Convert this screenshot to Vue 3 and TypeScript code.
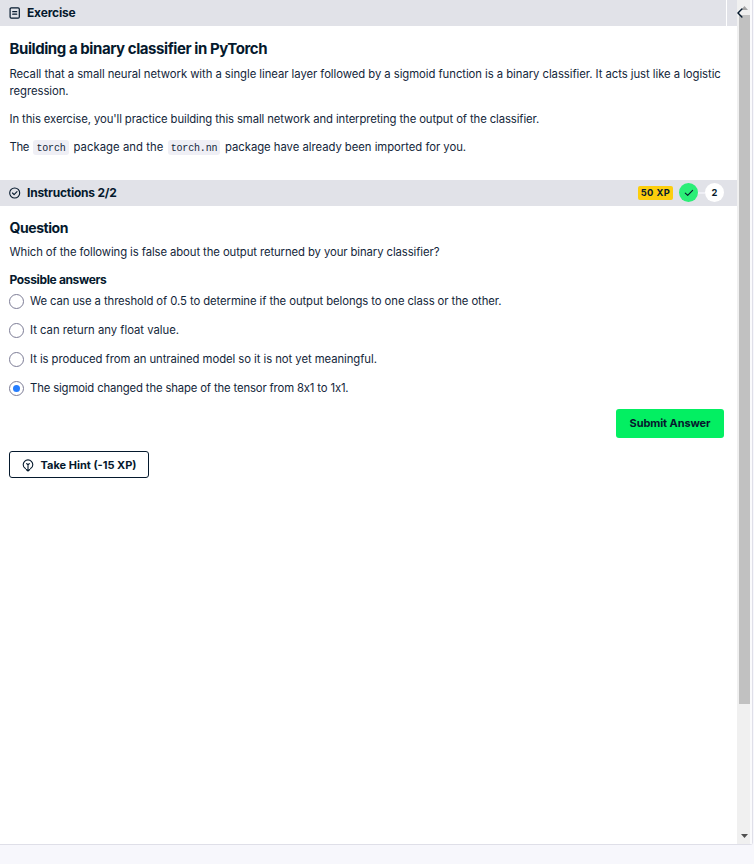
<script setup lang="ts">
import { ref } from 'vue'

interface Answer {
  id: string
  text: string
}

const answers: Answer[] = [
  { id: 'a1', text: 'We can use a threshold of 0.5 to determine if the output belongs to one class or the other.' },
  { id: 'a2', text: 'It can return any float value.' },
  { id: 'a3', text: 'It is produced from an untrained model so it is not yet meaningful.' },
  { id: 'a4', text: 'The sigmoid changed the shape of the tensor from 8x1 to 1x1.' },
]
const selected = ref<string>('a4')
</script>

<template>
  <div class="page">
    <div class="panel">
      <main class="content">
        <header class="bar">
          <svg class="bar-icon" viewBox="0 0 12 12" fill="none" stroke="#05192d" stroke-width="1.2" stroke-linecap="round">
            <rect x="1.1" y="0.9" width="9.2" height="10.2" rx="1.2" />
            <path d="M3.7 4.7h4M3.7 7.2h4" />
          </svg>
          <h2 class="bar-title exercise">Exercise</h2>
          <span class="divider"></span>
        </header>

        <section class="exercise-body">
          <h1 class="title">Building a binary classifier in PyTorch</h1>
          <p class="p1">Recall that a small neural network with a single linear layer followed by a sigmoid function is a binary classifier. It acts just like a logistic <br />regression.</p>
          <p class="p2">In this exercise, you'll practice building this small network and interpreting the output of the classifier.</p>
          <p class="p3"><span class="the">The</span><code class="c1">torch</code><span class="pkg">package and the</span><code class="c2">torch.nn</code><span class="have">package have already been imported for you.</span></p>
        </section>

        <header class="bar">
          <svg class="bar-icon" viewBox="0 0 12 12" fill="none" stroke="#05192d" stroke-width="1.1" stroke-linecap="round" stroke-linejoin="round">
            <circle cx="5.7" cy="6" r="5" />
            <path d="M3.5 6l1.6 1.6L8 4.7" />
          </svg>
          <h2 class="bar-title instructions">Instructions 2/2</h2>
          <div class="progress">
            <span class="xp">50 XP</span>
            <span class="step done">
              <svg viewBox="0 0 10 10" fill="none" stroke="#05192d" stroke-width="1.1" stroke-linecap="round" stroke-linejoin="round"><path d="M1.300 5.200l2.400 2.200L8.600 2.300" /></svg>
            </span>
            <span class="link"></span>
            <span class="step">2</span>
          </div>
        </header>

        <section class="question-body">
          <h3 class="question">Question</h3>
          <p class="prompt">Which of the following is false about the output returned by your binary classifier?</p>
          <h4 class="possible">Possible answers</h4>
          <ul class="answers">
            <li v-for="a in answers" :key="a.id" :class="['answer', a.id]" @click="selected = a.id">
              <span class="radio"><span v-if="selected === a.id" class="dot"></span></span>
              <span>{{ a.text }}</span>
            </li>
          </ul>
          <div class="actions"><button class="submit">Submit Answer</button></div>
          <button class="hint">
            <svg viewBox="0 0 12 13" fill="none" stroke="#05192d" stroke-width="1.1" stroke-linecap="round" stroke-linejoin="round">
              <path d="M3.400 9.500C2 8.700 1.200 7.300 1.200 5.700a4.800 4.800 0 0 1 9.600 0c0 1.600-.8 3-2.200 3.800M6 5v7M4.600 4.600L6 5.800l1.400-1.200M4.200 10.500L6 12l1.800-1.500" />
            </svg>
            <span>Take Hint (-15 XP)</span>
          </button>
        </section>
      </main>

      <aside class="scrollbar">
        <svg class="up" viewBox="0 0 13 15"><path d="M4 10h7L7.500 6z" fill="#a3a3a3" /></svg>
        <div class="thumb"></div>
        <svg class="down" viewBox="0 0 13 15"><path d="M4 5h7L7.500 9z" fill="#505050" /></svg>
        <svg class="collapse" viewBox="0 0 6 10" fill="none" stroke="#05192d" stroke-width="1.4" stroke-linecap="round"><path d="M4.900 1L1 5l3.900 4" /></svg>
      </aside>
    </div>
  </div>
</template>

<style>
body { margin: 0; background: #f7f7fc; }
</style>

<style scoped>
* { box-sizing: border-box; }
.page { height: 864px; background: #f7f7fc; color: #05192d; font-family: Inter, "Open Sans", sans-serif; font-size: 11.3px; font-feature-settings: "calt" 0; overflow: hidden; }
.panel { display: flex; width: 753px; height: 845px; background: #fff; border-right: 1px solid #dfdfe8; border-bottom: 1px solid #dfdfe8; border-radius: 0 0 3px 0; }
.content { flex: 1; min-width: 0; }
h1, h2, h3, h4, p, ul { margin: 0; padding: 0; }
.bar { display: flex; align-items: center; height: 26px; padding-left: 9px; background: #e1e2e8; }
.bar-icon { width: 12px; height: 12px; margin-right: 6px; flex: none; }
.bar-title { font-size: 12px; line-height: 26px; font-weight: 700; white-space: nowrap; }
.exercise { letter-spacing: -0.17px; }
.instructions { letter-spacing: -0.23px; }
.divider { width: 1px; height: 26px; margin-left: auto; margin-right: 10px; background: #fff; }
.exercise-body { height: 154px; padding: 12px 9px 0 9.5px; white-space: nowrap; }
.title { font-size: 15px; line-height: 21px; font-weight: 700; letter-spacing: -0.43px; }
.exercise-body p { line-height: 17px; color: #13263a; }
.p1 { margin-top: 7px; letter-spacing: -0.05px; }
.p2, .p3 { margin-top: 11px; }
.p2 { letter-spacing: -0.098px; }
.p3 { display: flex; }
.the { width: 23.5px; letter-spacing: -0.4px; }
.pkg { width: 94.5px; letter-spacing: 0.05px; }
.have { letter-spacing: -0.03px; }
code { display: flex; align-items: center; justify-content: center; height: 15px; margin: 1px 0 0; padding-top: 1px; border-radius: 3px; background: #efeff5; font: 10px "Liberation Mono", monospace; }
.c1 { width: 36px; margin-right: 4.5px; letter-spacing: -0.18px; }
.c2 { width: 52px; margin-right: 5px; letter-spacing: -0.18px; }
.progress { display: flex; align-items: center; margin-left: auto; padding: 0 13px 1px 0; font-weight: 700; }
.xp { display: flex; align-items: center; justify-content: center; width: 35px; height: 14px; margin-right: 6px; border-radius: 2px; background: #fcce0d; font-size: 9.3px; letter-spacing: 0.45px; }
.step { display: flex; align-items: center; justify-content: center; width: 19px; height: 19px; border-radius: 50%; background: #fff; font-size: 9.3px; }
.done { background: #2bee77; }
.done svg { width: 10px; height: 10px; }
.link { width: 7px; height: 2px; background: #efeff5; }
.question-body { padding: 12px 9px 0; white-space: nowrap; }
.question { padding-left: 0.5px; font-size: 14px; line-height: 20px; letter-spacing: -0.43px; }
.prompt { margin-top: 6px; padding-left: 0.5px; line-height: 17px; letter-spacing: -0.085px; color: #13263a; }
.possible { margin-top: 10px; padding-left: 0.5px; font-size: 12px; line-height: 18px; letter-spacing: -0.35px; }
.answers { list-style: none; margin-top: -2px; }
.answer { display: flex; align-items: center; height: 29px; line-height: 17px; color: #13263a; }
.a1 { letter-spacing: -0.083px; }
.a2 { letter-spacing: -0.015px; }
.a3 { letter-spacing: -0.057px; }
.a4 { letter-spacing: -0.14px; }
.radio { display: flex; align-items: center; justify-content: center; width: 15px; height: 15px; margin-right: 6px; border: 1px solid #7d7d96; border-radius: 50%; }
.dot { width: 7px; height: 7px; border-radius: 50%; background: #257dfe; }
.actions { display: flex; justify-content: flex-end; margin-top: 6px; padding-right: 4px; }
button { display: flex; align-items: center; justify-content: center; padding: 0; font: 700 11px Inter, sans-serif; color: #05192d; border: 0; border-radius: 3px; }
.submit { width: 108px; height: 29px; padding-bottom: 1px; background: #03ef62; letter-spacing: -0.1px; }
.hint { width: 140px; height: 27px; margin-top: 13px; border: 1px solid #05192d; background: #fff; gap: 7px; }
.hint svg { width: 12px; height: 13px; margin-top: 1px; }
.scrollbar { position: relative; display: flex; flex-direction: column; width: 15px; border-right: 2px solid #fafafc; background: #f0f0f0; }
.up, .down { display: block; width: 13px; height: 15px; }
.thumb { width: 11px; height: 689px; margin-left: 2px; background: #c1c1c1; }
.down { margin-top: auto; }
.collapse { position: absolute; left: 0; top: 8px; width: 6px; height: 10px; }
</style>
